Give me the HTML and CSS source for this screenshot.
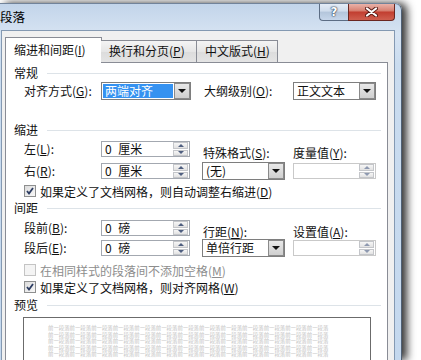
FILE: index.html
```html
<!DOCTYPE html>
<html lang="zh-CN">

<head>
  <meta charset="UTF-8">
  <meta name="viewport" content="width=device-width, initial-scale=1.0">
  <title>段落</title>
  <link rel="stylesheet" href="styles.css">
</head>

<body>
  <div class="window">
    <div class="titlebar">
      <span class="title">段落</span>
      <div class="caption">
        <span class="cap-btn help">?</span>
        <span class="cap-btn close">
          <svg width="13" height="10" viewBox="0 0 13 10">
            <path d="M2 1.5 L11 8.5 M11 1.5 L2 8.5" stroke="#5a1a14" stroke-width="4" stroke-linecap="round" />
            <path d="M2 1.5 L11 8.5 M11 1.5 L2 8.5" stroke="#fff" stroke-width="2.2" stroke-linecap="round" />
          </svg>
        </span>
      </div>
    </div>

    <div class="client">
      <div class="tabs">
        <div class="tab active">缩进和间距(<u>I</u>)</div>
        <div class="tab second">换行和分页(<u>P</u>)</div>
        <div class="tab third">中文版式(<u>H</u>)</div>
      </div>

      <div class="panel">
        <!-- 常规 -->
        <div class="group-title"><span>常规</span></div>
        <div class="grid general">
          <label class="lbl">对齐方式(<u>G</u>):</label>
          <div class="combo c2"><span class="value highlight">两端对齐</span><span class="drop"></span></div>
          <label class="lbl c45">大纲级别(<u>O</u>):</label>
          <div class="combo c6"><span class="value">正文文本</span><span class="drop"></span></div>
        </div>

        <!-- 缩进 -->
        <div class="group-title indent-title"><span>缩进</span></div>
        <div class="grid pair indent">
          <label class="lbl">左(<u>L</u>):</label>
          <div class="spin c2"><span class="value">0 厘米</span><span class="arrows"><i class="up"></i><i class="down"></i></span></div>
          <label class="lbl sub c4">特殊格式(<u>S</u>):</label>
          <label class="lbl sub c6">度量值(<u>Y</u>):</label>

          <label class="lbl">右(<u>R</u>):</label>
          <div class="spin c2"><span class="value">0 厘米</span><span class="arrows"><i class="up"></i><i class="down"></i></span></div>
          <div class="combo c4"><span class="value">(无)</span><span class="drop"></span></div>
          <div class="spin disabled c6"><span class="value"></span><span class="arrows"><i class="up"></i><i class="down"></i></span></div>
        </div>
        <div class="check-row first-check">
          <span class="checkbox checked"><svg width="8" height="8" viewBox="0 0 8 8"><path d="M1 4 L3 6.5 L7 1" fill="none" stroke="#2c3c62" stroke-width="1.8" /></svg></span>
          <span>如果定义了文档网格，则自动调整右缩进(<u>D</u>)</span>
        </div>

        <!-- 间距 -->
        <div class="group-title spacing-title"><span>间距</span></div>
        <div class="grid pair spacing">
          <label class="lbl">段前(<u>B</u>):</label>
          <div class="spin c2"><span class="value">0 磅</span><span class="arrows"><i class="up"></i><i class="down"></i></span></div>
          <label class="lbl sub c4">行距(<u>N</u>):</label>
          <label class="lbl sub c6">设置值(<u>A</u>):</label>

          <label class="lbl">段后(<u>E</u>):</label>
          <div class="spin c2"><span class="value">0 磅</span><span class="arrows"><i class="up"></i><i class="down"></i></span></div>
          <div class="combo c4"><span class="value">单倍行距</span><span class="drop"></span></div>
          <div class="spin disabled c6"><span class="value"></span><span class="arrows"><i class="up"></i><i class="down"></i></span></div>
        </div>
        <div class="check-row muted">
          <span class="checkbox"></span>
          <span>在相同样式的段落间不添加空格(<u>M</u>)</span>
        </div>
        <div class="check-row grid-check">
          <span class="checkbox checked"><svg width="8" height="8" viewBox="0 0 8 8"><path d="M1 4 L3 6.5 L7 1" fill="none" stroke="#2c3c62" stroke-width="1.8" /></svg></span>
          <span>如果定义了文档网格，则对齐网格(<u>W</u>)</span>
        </div>

        <!-- 预览 -->
        <div class="group-title preview-title"><span>预览</span></div>
        <div class="preview">
          <div class="ghost">前一段落前一段落前一段落前一段落前一段落前一段落前一段落前一段落前一段落前一段落前一段落前一段落前一段落</div>
          <div class="ghost">前一段落前一段落前一段落前一段落前一段落前一段落前一段落前一段落前一段落前一段落前一段落前一段落前一段落</div>
          <div class="ghost">前一段落前一段落前一段落前一段落前一段落前一段落前一段落前一段落前一段落前一段落前一段落前一段落前一段落</div>
          <div class="ghost">前一段落前一段落前一段落前一段落前一段落前一段落前一段落前一段落前一段落前一段落前一段落前一段落前一段落</div>
          <div class="ghost">前一段落前一段落前一段落前一段落前一段落前一段落前一段落前一段落前一段落前一段落前一段落前一段落前一段落</div>
        </div>
      </div>
    </div>
  </div>
</body>

</html>
```

FILE: styles.css
```css
html,
body {
  height: 360px;
}

body {
  margin: 0;
  background: #fff;
  font-family: "Noto Sans CJK SC", "Noto Sans", sans-serif;
  font-size: 12px;
  color: #111;
  overflow: hidden;
}

u {
  text-decoration: underline;
  text-underline-offset: 1px;
}

/* window frame */
.window {
  display: flex;
  flex-direction: column;
  margin-top: 3px;
  width: 402px;
  height: 357px;
  box-sizing: border-box;
  padding: 0 6px 0 1px;
  background: linear-gradient(to bottom, #c2d4ea 0, #d6e3f2 30px, #cadcef 60px, #c4d8ee 100%);
  border-top: 1px solid #71839a;
  border-right: 1px solid #4f6075;
  border-top-right-radius: 7px;
  box-shadow: 5px 0 9px 0 rgba(0, 0, 0, 0.8);
}

.titlebar {
  display: flex;
  align-items: flex-start;
  height: 26px;
  flex: none;
}

.title {
  margin-left: -1px;
  padding-top: 5px;
  line-height: 16px;
  font-size: 12.5px;
  color: #000;
}

.caption {
  margin-left: auto;
  display: flex;
}

.cap-btn {
  display: flex;
  align-items: center;
  justify-content: center;
  height: 17px;
  box-sizing: border-box;
  border: 1px solid #5c6d84;
  border-top: none;
}

.help {
  width: 29px;
  border-bottom-left-radius: 4px;
  border-right: none;
  background: linear-gradient(to bottom, #e4ecf6 0, #cfdcec 45%, #b3c5db 50%, #c6d6ea 100%);
  color: #fff;
  font-family: "DejaVu Sans", sans-serif;
  font-weight: bold;
  font-size: 12px;
  text-shadow: 0 0 1px #2d3e58, 0 0 1px #2d3e58, 0 0 2px #2d3e58;
}

.close {
  width: 47px;
  border-bottom-right-radius: 4px;
  border-color: #6a2620;
  background: linear-gradient(to bottom, #e9b2a9 0, #d98475 40%, #c23f31 52%, #cf5f4f 100%);
}

/* client area */
.client {
  flex: 1;
  display: flex;
  flex-direction: column;
  min-height: 0;
  border: 1px solid #8499b2;
  border-bottom: none;
  background: #f0f0f0;
  padding: 6px 6px 0 3px;
}

.tabs {
  display: flex;
  align-items: flex-end;
  height: 26px;
  flex: none;
  margin-bottom: -1px;
  position: relative;
  z-index: 1;
}

.tab {
  box-sizing: border-box;
  height: 22px;
  margin-bottom: 1px;
  border: 1px solid #898c95;
  border-bottom: none;
  padding: 2px 0 0 8px;
  line-height: 16px;
  white-space: nowrap;
  background: linear-gradient(to bottom, #f4f4f4, #e6e6e6 50%, #dcdcdc 51%, #e4e4e4);
}

.tab.active {
  width: 97px;
  height: 26px;
  margin-bottom: 0;
  padding-top: 4px;
  background: #fff;
}

.tab.second {
  width: 96px;
  margin-left: -1px;
  border-left: none;
}

.tab.third {
  width: 82px;
  margin-left: -1px;
}

.panel {
  flex: 1;
  min-height: 0;
  overflow: hidden;
  border: 1px solid #898c95;
  border-bottom: none;
  background: #fff;
  padding: 2px 6px 0 8px;
}

/* group headings */
.group-title {
  display: flex;
  align-items: center;
  gap: 9px;
  height: 16px;
  line-height: 16px;
}

.group-title::after {
  content: "";
  flex: 1;
  height: 1px;
  background: #dde3e8;
}

.indent-title {
  margin-top: 22px;
}

.spacing-title {
  margin-top: 1px;
}

.preview-title {
  margin-top: 2px;
}

/* rows */
.grid {
  display: grid;
  grid-template-columns: 77px 90px 11px 83px 8px 83px;
  margin-left: 10px;
  align-items: center;
}

.general {
  grid-template-rows: 18px;
  margin-top: 1px;
}

.pair {
  grid-template-rows: 16px 18px;
  row-gap: 5px;
  margin-top: 3px;
}

.spacing {
  margin-top: 4px;
  row-gap: 3px;
}

.lbl {
  line-height: 16px;
  white-space: nowrap;
}

.lbl.sub {
  align-self: start;
  line-height: 24px;
  height: 16px;
}

.c2 {
  grid-column: 2;
}

.c4 {
  grid-column: 4;
  padding-left: 1px;
}

.c45 {
  grid-column: 4 / 6;
  padding-left: 2px;
}

.c6 {
  grid-column: 6;
}

/* combo box */
.combo {
  display: flex;
  height: 18px;
  box-sizing: border-box;
  border: 1px solid #7e7e7e;
  background: #fff;
}

.combo .value {
  flex: 1;
  margin: 1px 0 1px 1px;
  padding-left: 2px;
  line-height: 14px;
  white-space: nowrap;
}

.combo .value.highlight {
  background: #3592f1;
  color: #fff;
}

.combo .drop {
  width: 16px;
  box-sizing: border-box;
  border: 1px solid #8a8a8a;
  margin: 0 0 0 1px;
  background: linear-gradient(to bottom, #e8e8e8, #cfcfcf);
  display: flex;
  align-items: center;
  justify-content: center;
}

.combo .drop::before {
  content: "";
  border-left: 4px solid transparent;
  border-right: 4px solid transparent;
  border-top: 4px solid #111;
}

.combo.c4 {
  padding-left: 0;
}

/* spin box */
.spin {
  display: flex;
  width: 89px;
  height: 16px;
  box-sizing: border-box;
  border: 1px solid #a3a8b0;
  background: #fff;
}

.spin.c6 {
  width: 83px;
  height: 16px;
}

.spin .value {
  flex: 1;
  padding-left: 3px;
  line-height: 14px;
  word-spacing: 4px;
  white-space: nowrap;
}

.spin .arrows {
  width: 15px;
  display: flex;
  flex-direction: column;
  gap: 1px;
  padding: 0 1px 0 0;
}

.spin .arrows i {
  flex: 1;
  display: flex;
  align-items: center;
  justify-content: center;
  border: 1px solid #c4c6ca;
  background: linear-gradient(to bottom, #f6f6f6, #e2e2e2);
}

.spin .up::before {
  content: "";
  border-left: 3px solid transparent;
  border-right: 3px solid transparent;
  border-bottom: 3px solid #4f5f80;
}

.spin .down::before {
  content: "";
  border-left: 3px solid transparent;
  border-right: 3px solid transparent;
  border-top: 3px solid #4f5f80;
}

.spin.disabled {
  border-color: #c9c9c9;
}

.spin.disabled .up::before {
  border-bottom-color: #8e99b0;
}

.spin.disabled .down::before {
  border-top-color: #8e99b0;
}

/* check boxes */
.check-row {
  display: flex;
  align-items: center;
  gap: 4px;
  height: 16px;
  margin-left: 10px;
  white-space: nowrap;
}

.first-check {
  margin-top: 3px;
}

.muted {
  margin-top: 5px;
  color: #8d8d8d;
}

.grid-check {
  margin-top: 1px;
}

.checkbox {
  display: flex;
  align-items: center;
  justify-content: center;
  width: 12px;
  height: 12px;
  box-sizing: border-box;
  border: 1px solid #8e8f8f;
  background: linear-gradient(135deg, #dcdcdc, #f8f8f8);
}

.muted .checkbox {
  border-color: #c4c4c4;
  background: #f4f4f4;
}

/* preview */
.preview {
  margin: 4px 0 0 9px;
  width: 348px;
  height: 60px;
  box-sizing: border-box;
  border: 1px solid #6b6b6b;
  border-bottom: none;
  background: #fff;
  padding: 7px 0 0 24px;
}

.ghost {
  font-size: 5.4px;
  line-height: 6.5px;
  color: #c4c4c4;
  white-space: nowrap;
}
```
